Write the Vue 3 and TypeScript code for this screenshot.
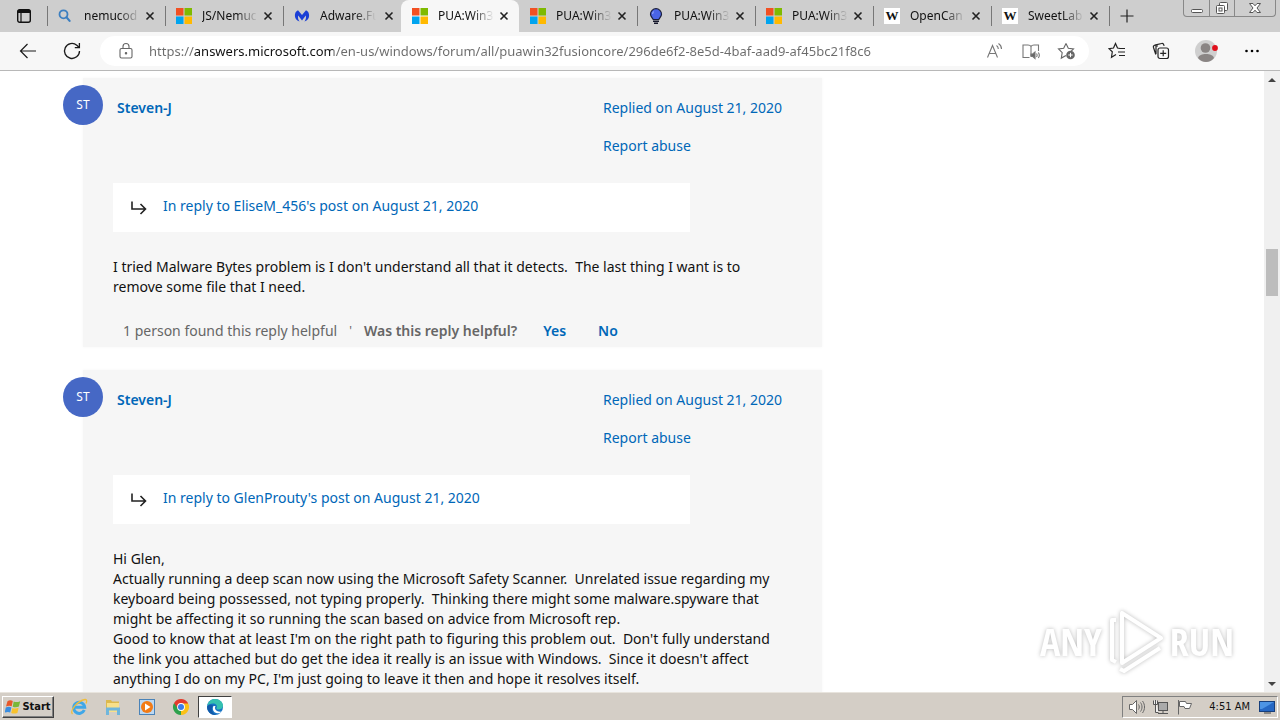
<script setup lang="ts">
import { ref } from 'vue'

type TabIcon = 'search' | 'ms' | 'malware' | 'bulb' | 'wiki'

interface Tab {
  icon: TabIcon
  title: string
  active?: boolean
}

interface Reply {
  id: number
  author: string
  initials: string
  date: string
  quote: string
  lines: string[]
  helpful?: string
}

const tabs: Tab[] = [
  { icon: 'search', title: 'nemucod' },
  { icon: 'ms', title: 'JS/Nemuc' },
  { icon: 'malware', title: 'Adware.Fu' },
  { icon: 'ms', title: 'PUA:Win3', active: true },
  { icon: 'ms', title: 'PUA:Win3' },
  { icon: 'bulb', title: 'PUA:Win3' },
  { icon: 'ms', title: 'PUA:Win3' },
  { icon: 'wiki', title: 'OpenCan' },
  { icon: 'wiki', title: 'SweetLab' },
]

const url = ref(
  'https://answers.microsoft.com/en-us/windows/forum/all/puawin32fusioncore/296de6f2-8e5d-4baf-aad9-af45bc21f8c6',
)

const replies: Reply[] = [
  {
    id: 1,
    author: 'Steven-J',
    initials: 'ST',
    date: 'Replied on August 21, 2020',
    quote: "In reply to EliseM_456's post on August 21, 2020",
    lines: [
      "I tried Malware Bytes problem is I don't understand all that it detects.  The last thing I want is to",
      'remove some file that I need.',
    ],
    helpful: '1 person found this reply helpful',
  },
  {
    id: 2,
    author: 'Steven-J',
    initials: 'ST',
    date: 'Replied on August 21, 2020',
    quote: "In reply to GlenProuty's post on August 21, 2020",
    lines: [
      'Hi Glen,',
      'Actually running a deep scan now using the Microsoft Safety Scanner.  Unrelated issue regarding my',
      'keyboard being possessed, not typing properly.  Thinking there might some malware.spyware that',
      'might be affecting it so running the scan based on advice from Microsoft rep.',
      "Good to know that at least I'm on the right path to figuring this problem out.  Don't fully understand",
      "the link you attached but do get the idea it really is an issue with Windows.  Since it doesn't affect",
      "anything I do on my PC, I'm just going to leave it then and hope it resolves itself.",
    ],
  },
]
</script>

<template>
  <div class="screen">
    <header class="tabstrip">
      <button class="tab-actions" aria-label="Tab actions menu">
        <svg width="16" height="16" viewBox="0 0 16 16">
          <rect x="1.7" y="1.7" width="12.6" height="12.6" rx="2" fill="none" stroke="#111" stroke-width="1.4" />
          <path d="M1.5 5V3.5a2 2 0 0 1 2-2h9a2 2 0 0 1 2 2V5z" fill="#111" />
          <path d="M5 5v9" stroke="#111" stroke-width="1.2" />
        </svg>
      </button>
      <div v-for="(tab, i) in tabs" :key="i" class="tab" :class="{ active: tab.active, after: i === 4 }">
        <span class="favicon">
          <svg v-if="tab.icon === 'search'" width="16" height="16" viewBox="0 0 16 16">
            <circle cx="5.500" cy="6.300" r="4" fill="none" stroke="#3c7fc0" stroke-width="1.8" />
            <path d="M8.600 9.400l3 3.500" stroke="#3c7fc0" stroke-width="2.2" stroke-linecap="round" />
          </svg>
          <svg v-else-if="tab.icon === 'ms'" width="16" height="16" viewBox="0 0 16 16">
            <path d="M0 0h7.5v7.5H0z" fill="#f25022" />
            <path d="M8.5 0H16v7.5H8.5z" fill="#7fba00" />
            <path d="M0 8.5h7.5V16H0z" fill="#00a4ef" />
            <path d="M8.5 8.5H16V16H8.5z" fill="#ffb900" />
          </svg>
          <svg v-else-if="tab.icon === 'malware'" width="16" height="16" viewBox="0 0 16 16">
            <path
              d="M4 2.2C1.7 3.2.7 5.600.9 8c.2 2.800 2 5 4.700 5.500C4.200 12 3.700 9.700 4.200 7.600L8 12.500l3.800-4.900c.5 2.100 0 4.400-1.400 5.900 2.700-.5 4.500-2.700 4.700-5.500.2-2.400-.8-4.800-3.100-5.800L8 7z"
              fill="#1b3fd6"
            />
          </svg>
          <svg v-else-if="tab.icon === 'bulb'" width="16" height="16" viewBox="0 0 16 16">
            <path
              d="M8 .7a5.500 5.500 0 0 1 5.500 5.500c0 2.300-1.900 3.400-2.700 5.300H5.200C4.400 9.600 2.500 8.500 2.500 6.200A5.500 5.500 0 0 1 8 .7z"
              fill="#4a64e6"
              stroke="#1b1f3b"
              stroke-width="1.200"
            />
            <path d="M6 3.500C5 4 4.600 5 4.700 6" fill="none" stroke="#a9b8ff" />
            <path d="M5 13.200h6M6 15.200h4" stroke="#15172b" stroke-width="1.500" />
          </svg>
          <span v-else class="wiki">W</span>
        </span>
        <span class="tab-title">{{ tab.title }}</span>
        <button class="close" aria-label="Close tab">
          <svg width="10" height="10" viewBox="0 0 10 10">
            <path d="M1.500 1.500l7 7M8.500 1.500l-7 7" stroke="#222" stroke-width="1.600" />
          </svg>
        </button>
      </div>
      <button class="new-tab" aria-label="New tab">
        <svg width="14" height="14" viewBox="0 0 14 14">
          <path d="M7 .5v13M.5 7h13" stroke="#222" stroke-width="1.200" />
        </svg>
      </button>
      <div class="window-controls">
        <button aria-label="Minimize">
          <svg width="14" height="14" viewBox="0 0 14 14">
            <rect x="1.500" y="8.500" width="11" height="3" rx="1" fill="#fff" stroke="#555" />
          </svg>
        </button>
        <button aria-label="Restore">
          <svg width="14" height="14" viewBox="0 0 14 14" fill="#fff" stroke="#555">
            <rect x="4.500" y="1.500" width="8" height="8" rx="1" />
            <rect x="1.500" y="4.500" width="8" height="8" rx="1" />
            <rect x="4" y="7" width="3" height="3" />
          </svg>
        </button>
        <button class="wide" aria-label="Close">
          <svg width="14" height="14" viewBox="0 0 14 14">
            <path
              d="M1.500 2.500h3.500l2 2.300 2-2.300h3.500L9 7l3.500 4.500H9L7 9.200l-2 2.300H1.500L5 7z"
              fill="#fff"
              stroke="#555"
            />
          </svg>
        </button>
      </div>
    </header>

    <nav class="toolbar">
      <button class="tool" aria-label="Back">
        <svg width="20" height="20" viewBox="0 0 20 20" fill="none" stroke="#1a1a1a" stroke-width="1.200">
          <path d="M18 10H2.500M9.500 3L2.500 10l7 7" />
        </svg>
      </button>
      <button class="tool" aria-label="Refresh">
        <svg width="20" height="20" viewBox="0 0 20 20" fill="none" stroke="#1a1a1a" stroke-width="1.300">
          <path d="M17.500 10A7.500 7.500 0 1 1 14.800 4.200L17.300 6.500" />
          <path d="M17.400 2v4.600h-4.600" />
        </svg>
      </button>
      <div class="address">
        <button class="lock" aria-label="View site information">
          <svg width="16" height="18" viewBox="0 0 16 18" fill="none" stroke="#666" stroke-width="1.100">
            <rect x="2" y="6.500" width="12" height="9.500" rx="1.500" />
            <path d="M5 6.500V4.500a3 3 0 0 1 6 0v2" />
            <circle cx="8" cy="11.200" r=".7" fill="#555" />
          </svg>
        </button>
        <input v-model="url" class="url" type="text" aria-label="Address and search bar" spellcheck="false" />
        <button class="addr-btn" aria-label="Read aloud">
          <svg width="18" height="18" viewBox="0 0 18 18" fill="none" stroke="#777" stroke-width="1.100">
            <path d="M1.500 15.500L6.500 3.500l5 12M3.200 11.500h6.600" />
            <path d="M10.500 3.500c1.300.8 1.800 2 1.800 3.500M12.500 1.500c2 1.300 3 3.200 3 5.500" />
          </svg>
        </button>
        <button class="addr-btn" aria-label="Immersive reader">
          <svg width="20" height="18" viewBox="0 0 20 18" fill="none" stroke="#777" stroke-width="1.100">
            <path d="M8.500 15.500H2V3h5c1.500 0 2.500.5 3 1.500C10.500 3.500 11.500 3 13 3h4.500v6M10 4.500V14" />
            <path d="M10 12v2.500h1.800l2.200 2V10l-2.200 2z" fill="#666" />
            <path d="M15.500 11.500c.7 1 .7 2.500 0 3.500M17.300 10.500c1.200 1.700 1.200 4 0 5.500" />
          </svg>
        </button>
        <button class="addr-btn" aria-label="Add to favorites">
          <svg width="20" height="18" viewBox="0 0 20 18">
            <path
              d="M9 1.500l2.300 4.800 5.200.7-3.800 3.600.3 1.600M9 13.500l-4.700 2.600.9-5.400L1.500 7l5.200-.7L9 1.500"
              fill="none"
              stroke="#666"
              stroke-width="1.100"
            />
            <circle cx="13.500" cy="13" r="4.300" fill="#666" />
            <path d="M13.500 10.800v4.400M11.300 13h4.400" stroke="#fff" />
          </svg>
        </button>
      </div>
      <button class="tool" aria-label="Favorites">
        <svg width="18" height="18" viewBox="0 0 18 18" fill="none" stroke="#222" stroke-width="1.200">
          <path d="M12 6.500l-2.500-.5L7.500 1.500 5.500 6 1 6.600l3.300 3.200-.8 5.400 4.500-2.800M11 6.500h6M10 10h7M11 13.500h6" />
        </svg>
      </button>
      <button class="tool" aria-label="Collections">
        <svg width="18" height="18" viewBox="0 0 18 18" fill="none" stroke="#222" stroke-width="1.200">
          <rect x="6" y="6" width="10.500" height="10.500" rx="2" />
          <path d="M11.200 8.300v6M8.200 11.300h6M3.800 12.500L1.500 5.500c-.3-1 .2-2 1.200-2.300L9.500 1.500c1-.3 2 .3 2.300 1.300l.3 1M6 4H4v8" />
        </svg>
      </button>
      <button class="tool large" aria-label="Profile">
        <svg width="24" height="24" viewBox="0 0 24 24">
          <circle cx="12" cy="12" r="11" fill="#cfcfcf" />
          <circle cx="11.500" cy="9" r="4.800" fill="#8a8584" />
          <path d="M4 19c1-3 4-4 8-4s7 1 8 4c-2 2.500-5 4-8 4s-6-1.500-8-4z" fill="#8a8584" />
          <circle cx="21" cy="9" r="2.900" fill="#e0101c" />
        </svg>
      </button>
      <button class="tool large" aria-label="Settings and more">
        <svg width="16" height="6" viewBox="0 0 16 6">
          <circle cx="2.500" cy="3" r="1.300" /><circle cx="8" cy="3" r="1.300" /><circle cx="13.500" cy="3" r="1.300" />
        </svg>
      </button>
    </nav>

    <div class="viewport">
      <main class="thread">
        <article v-for="reply in replies" :key="reply.id" class="card">
          <span class="avatar">{{ reply.initials }}</span>
          <div class="head">
            <a class="author" href="#">{{ reply.author }}</a>
            <div class="meta">
              <a href="#">{{ reply.date }}</a>
              <a href="#">Report abuse</a>
            </div>
          </div>
          <div class="quote">
            <svg width="16" height="16" viewBox="0 0 16 16" fill="none" stroke="#222" stroke-width="1.600">
              <path d="M1 1.500v7.500h13.500M9.500 4l5 5-5 5" />
            </svg>
            <a href="#">{{ reply.quote }}</a>
          </div>
          <p class="body">
            <template v-for="(line, n) in reply.lines" :key="n">{{ line }}<br /></template>
          </p>
          <div v-if="reply.helpful" class="feedback">
            <span class="count">{{ reply.helpful }}</span>
            <span class="dot">'</span>
            <span class="ask">Was this reply helpful?</span>
            <button>Yes</button>
            <button>No</button>
          </div>
        </article>
      </main>
      <div class="scrollbar">
        <button aria-label="Scroll up"><i class="up"></i></button>
        <div class="track"><div class="thumb"></div></div>
        <button aria-label="Scroll down"><i class="down"></i></button>
      </div>
      <div class="watermark">
        <span>ANY</span>
        <svg width="62" height="66" viewBox="0 0 62 66" fill="none" stroke="#fff" stroke-width="4" stroke-linejoin="round">
          <path d="M17 5v50l39-25z" />
          <path d="M11 12H7v40l4 2M15 61l4 2 36-23" />
        </svg>
        <span>RUN</span>
      </div>
    </div>

    <footer class="taskbar">
      <button class="start">
        <svg width="16" height="16" viewBox="0 0 16 16">
          <path d="M2.500 2.200C4.500 1 6 1.200 7.800 2L6.700 7.300C5 6.500 3.500 6.500 1 7.500z" fill="#e8582a" />
          <path d="M8.700 2.400c1.800.9 3.800.9 6.500-.2l-1.300 5.400c-2.300 1-4.300.9-6.200.1z" fill="#7ab738" />
          <path d="M.8 8.600c2-1 4-.9 5.600-.2L5.200 13.500C3.600 12.700 2 12.700-.4 13.700z" fill="#3a8de0" />
          <path d="M7.400 8.900c1.800.8 3.900.8 6.200-.2l-1.200 5.200c-2.300 1-4.300.9-6.200.1z" fill="#f8c22d" />
        </svg>
        Start
      </button>
      <div class="launch">
        <button aria-label="Internet Explorer">
          <svg width="18" height="18" viewBox="0 0 18 18" fill="none">
            <path d="M14.300 12a5.500 5.500 0 1 1 .4-2.700H5" stroke="#3fa7e8" stroke-width="3" />
            <path d="M2.500 16C-.5 13 7 3 15 1.500c2-.3 2 2 1 4" stroke="#f0bd3a" stroke-width="1.300" />
          </svg>
        </button>
        <button aria-label="File Explorer">
          <svg width="18" height="18" viewBox="0 0 18 18">
            <path d="M2 2h5l1 1.500h7V14H2z" fill="#dcb94e" />
            <path d="M3 5h12v9H3z" fill="#f8e08a" />
            <path d="M2 17V9.500h14V17h-3v-4.500H5V17z" fill="#6fb6dc" />
          </svg>
        </button>
        <button aria-label="Media Player">
          <svg width="18" height="18" viewBox="0 0 18 18">
            <rect x="1.500" y="1.500" width="15" height="15" fill="#bcd8f2" stroke="#4a83b8" />
            <circle cx="9" cy="9" r="6" fill="#f27b16" />
            <path d="M7 5.500v7l5.500-3.500z" fill="#fff" />
          </svg>
        </button>
        <button aria-label="Chrome">
          <svg width="18" height="18" viewBox="0 0 18 18">
            <path d="M9 9V1l6.930 4A8 8 0 0 1 9 17z" fill="#fbc116" />
            <path d="M9 9v8A8 8 0 0 1 2.070 5z" fill="#2da14c" />
            <path d="M9 5.400h7L15.930 5A8 8 0 0 0 2.070 5L5.900 10.800z" fill="#e33b2e" />
            <circle cx="9" cy="9" r="3.900" fill="#fff" />
            <circle cx="9" cy="9" r="3" fill="#3b7de9" />
          </svg>
        </button>
        <button class="running" aria-label="Microsoft Edge">
          <svg width="18" height="18" viewBox="0 0 18 18">
            <circle cx="9" cy="9" r="8" fill="#1673c4" />
            <path d="M1.200 8C2 3.500 5.500 1 9 1c4.500 0 8 3 8 6.500 0 2.500-2 4-4.500 4-1.500 0-2.500-.7-2-1.500C12 7.500 9.500 5.500 7 5.500 4.200 5.500 2 6.500 1.200 8z" fill="#35c1b0" />
            <path d="M7.500 8c-1.500 2.500-.5 6.500 3.500 7.200 2 .3 3.800-.4 5-1.700-1.500.3-3.500.3-5-.5-1.700-1-2.700-3-1.500-5z" fill="#fff" />
            <path d="M7.200 7.500C4.500 10 6 15.500 10 16.900c-5 .6-9-3.400-8.900-8.200C2 6.500 5.500 6 7.200 7.500z" fill="#1259a8" />
          </svg>
        </button>
      </div>
      <div class="tray">
        <svg width="18" height="16" viewBox="0 0 18 16" fill="#fff" stroke="#666">
          <path d="M1.500 5.500h3l4-4v13l-4-4h-3z" />
          <path d="M10.500 5.500c1 1.500 1 3.500 0 5M12.500 3.500c2 2.700 2 6.300 0 9M14.500 2c2.700 3.700 2.700 8.300 0 12" fill="none" />
        </svg>
        <svg width="18" height="16" viewBox="0 0 18 16" fill="#eee" stroke="#555">
          <rect x="6.500" y="3.500" width="9" height="8" fill="#aaa" />
          <path d="M6 14.500h10M11 11.500v3M1.500 1.500v4h4v-4M3.500 1v4.500v8h3" />
        </svg>
        <svg width="18" height="16" viewBox="0 0 18 16" fill="#fff" stroke="#666">
          <path d="M3.500 2.500h6l1 2h5l-2 5H9l-1-2H3.500z" />
          <path d="M2.500 1v14.500" />
        </svg>
        <time>4:51 AM</time>
        <svg width="16" height="14" viewBox="0 0 16 14">
          <rect x=".5" y="1.500" width="15" height="10" fill="#2668c4" stroke="#173f7c" />
          <path d="M1 2h14L3 9H1z" fill="#4d94e4" />
          <path d="M5 13h7" stroke="#444" />
        </svg>
      </div>
    </footer>
  </div>
</template>

<style>
html,
body {
  margin: 0;
  overflow: hidden;
}
</style>

<style scoped>
.screen {
  display: flex;
  flex-direction: column;
  height: 100vh;
  overflow: hidden;
  background: #fff;
  color: #111;
  font: 14px/20px "Noto Sans", "Open Sans", sans-serif;
}

button {
  display: flex;
  align-items: center;
  justify-content: center;
  padding: 0;
  border: 0;
  background: none;
  font: inherit;
  color: inherit;
}

svg {
  display: block;
  flex: none;
}

a {
  color: #0067b8;
  text-decoration: none;
}

.tabstrip {
  position: relative;
  display: flex;
  flex: none;
  height: 32px;
  background: #cecece;
}

.tab-actions {
  flex: none;
  width: 47px;
}

.tab {
  display: flex;
  align-items: center;
  flex: 0 1 118px;
  box-sizing: border-box;
  min-width: 0;
  padding: 0 10px 0 11px;
  background: linear-gradient(#777, #777) left center / 1px 20px no-repeat;
}

.tab.active {
  border-radius: 8px 8px 0 0;
  background: #f7f7f7;
}

.tab.after {
  background: none;
}

.favicon {
  flex: none;
  width: 16px;
  height: 16px;
  margin-right: 10px;
}

.wiki {
  display: block;
  background: #fff;
  font: bold 13px/16px "Liberation Serif", serif;
  text-align: center;
}

.tab-title {
  flex: 1;
  white-space: nowrap;
  font-size: 12px;
  -webkit-mask-image: linear-gradient(to right, #000 34px, transparent 56px);
  mask-image: linear-gradient(to right, #000 34px, transparent 56px);
}

.close {
  flex: none;
  width: 10px;
  height: 16px;
  margin-left: 4px;
}

.new-tab {
  width: 36px;
  background: linear-gradient(#777, #777) left center / 1px 20px no-repeat;
}

.window-controls {
  position: absolute;
  top: 0;
  right: 4px;
  display: flex;
  height: 16px;
  border: 1px solid #888;
  border-top: 0;
  border-radius: 0 0 4px 4px;
}

.window-controls button {
  width: 25px;
}

.window-controls button + button {
  border-left: 1px solid #888;
}

.window-controls .wide {
  width: 41px;
}

.toolbar {
  display: flex;
  align-items: center;
  flex: none;
  height: 38px;
  padding: 0 5px 0 6px;
  border-bottom: 1px solid #b8b8b8;
  background: #f7f7f7;
}

.tool {
  flex: none;
  width: 44px;
  height: 32px;
}

.tool.large {
  width: 46px;
}

.address {
  display: flex;
  align-items: center;
  flex: 1;
  min-width: 0;
  height: 30px;
  margin: 0 6px;
  padding: 0 4px 0 14px;
  border-radius: 15px;
  background: #fff;
}

.lock {
  flex: none;
  width: 24px;
}

.url {
  flex: 1;
  min-width: 0;
  height: 24px;
  margin-left: 11px;
  padding: 0;
  border: 0;
  outline: 0;
  font: 13px/20px "Noto Sans", "Open Sans", sans-serif;
  color: transparent;
  background: linear-gradient(to right, #6b6b6b 45px, #111 45px 184px, #6b6b6b 184px);
  -webkit-background-clip: text;
  background-clip: text;
}

.addr-btn {
  flex: none;
  width: 36px;
}

.viewport {
  position: relative;
  display: flex;
  flex: 1;
  min-height: 0;
}

.thread {
  flex: 1;
  min-width: 0;
  padding: 7px 20px 0 83px;
  overflow: hidden;
}

.card {
  position: relative;
  box-sizing: border-box;
  max-width: 739px;
  margin-bottom: 23px;
  padding: 20px 30px 6px;
  background: #f6f6f6;
  box-shadow: 0 0 3px #f6f6f6;
}

.avatar {
  position: absolute;
  top: 7px;
  left: -20px;
  width: 40px;
  height: 40px;
  border-radius: 50%;
  background: #4668c5;
  color: #fff;
  font-size: 12px;
  line-height: 40px;
  text-align: center;
}

.head {
  display: flex;
  justify-content: space-between;
  padding-left: 4px;
}

.author {
  font-weight: 600;
}

.meta {
  display: flex;
  flex-direction: column;
  gap: 18px;
  width: 189px;
}

.quote {
  display: flex;
  align-items: flex-start;
  gap: 16px;
  box-sizing: border-box;
  max-width: 577px;
  height: 49px;
  margin-top: 27px;
  padding: 13px 18px 0;
  background: #fff;
}

.quote svg {
  margin-top: 4px;
}

.body {
  margin: 25px 0 24px;
  white-space: pre;
}

.feedback {
  display: flex;
  align-items: center;
  padding-left: 10px;
  color: #666;
}

.dot {
  margin: 0 12px;
  font-size: 12px;
}

.ask {
  margin-right: 26px;
  font-weight: 600;
}

.feedback button {
  margin-right: 32px;
  color: #0067b8;
  font-weight: 600;
}

.scrollbar {
  display: flex;
  flex-direction: column;
  flex: none;
  width: 16px;
  background: #f0f0f0;
}

.scrollbar button {
  height: 17px;
}

.up,
.down {
  border: 4px solid transparent;
}

.up {
  border-top: 0;
  border-bottom-color: #444;
}

.down {
  border-bottom: 0;
  border-top-color: #444;
}

.track {
  flex: 1;
  padding: 161px 2px 0;
}

.thumb {
  height: 47px;
  background: #bdbdbd;
}

.watermark {
  position: absolute;
  right: 46px;
  bottom: 18px;
  display: flex;
  align-items: center;
  gap: 3px;
  color: #fff;
  font: 38px/60px "Liberation Sans Narrow", "Open Sans Condensed", "Roboto Condensed", sans-serif;
  filter: drop-shadow(0 0 2px #bbb);
}

.taskbar {
  display: flex;
  align-items: center;
  flex: none;
  box-sizing: border-box;
  height: 28px;
  padding: 0 2px;
  border-top: 1px solid #e8e4dd;
  background: #d4cec6;
  font: 11px/16px "DejaVu Sans Condensed", "DejaVu Sans", sans-serif;
}

.start {
  gap: 1px;
  box-sizing: border-box;
  width: 52px;
  height: 22px;
  border: 1px solid;
  border-color: #fff #404040 #404040 #fff;
  box-shadow: inset -1px -1px #808080;
  font-weight: bold;
}

.launch {
  display: flex;
  flex: 1;
  padding-left: 8px;
}

.launch button {
  width: 34px;
  height: 22px;
}

.launch .running {
  box-sizing: border-box;
  border: 1px solid;
  border-color: #404040 #fff #fff #404040;
  background: #fff;
}

.tray {
  display: flex;
  align-items: center;
  gap: 6px;
  box-sizing: border-box;
  height: 22px;
  padding: 0 2px 0 5px;
  border: 1px solid;
  border-color: #808080 #fff #fff #808080;
}

.tray time {
  margin: 0 3px 0 9px;
}
</style>
